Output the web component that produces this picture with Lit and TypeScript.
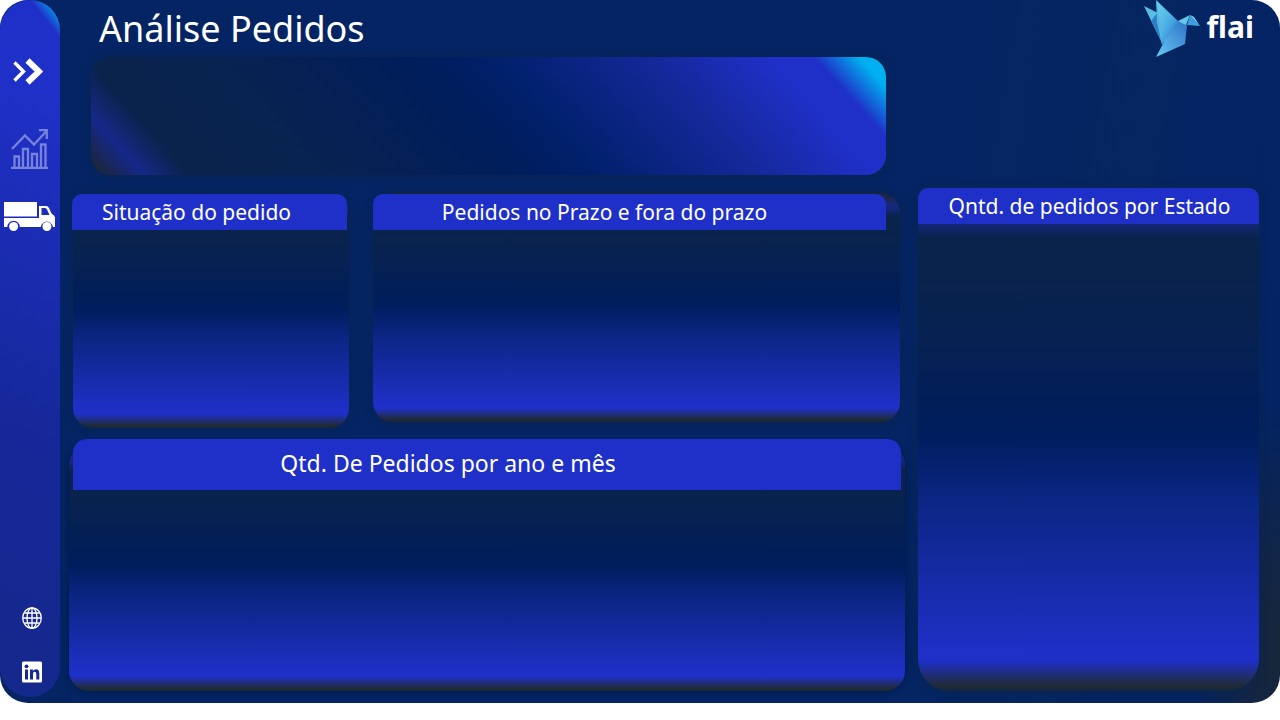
import { LitElement, html, css, svg } from "lit";
import { customElement, property } from "lit/decorators.js";

@customElement("side-nav")
class SideNav extends LitElement {
  static styles = css`
    :host {
      display: flex;
      flex-direction: column;
      align-items: center;
      box-sizing: border-box;
      width: 60px;
      flex: none;
      padding: 58px 0 14px;
      margin-bottom: 6px;
      border-radius: 34px;
      background:
        linear-gradient(52deg, transparent 72%, #0c86e4 86%, #00a0ec 100%) top / 100% 60px no-repeat,
        linear-gradient(20deg, #15288b 0%, #16289a 40%, #1f30c8 86%, #1f30c8 100%);
    }
    nav, .links { display: flex; flex-direction: column; align-items: center; }
    .links { margin-top: auto; gap: 32px; padding-left: 4px; }
    a, button { display: block; padding: 0; border: 0; background: none; color: #fff; cursor: pointer; }
    svg { display: block; }
    .toggle { margin: 0 4px 44px 0; }
    .chart { margin-bottom: 32px; color: #7682dc; }
  `;
  render() {
    return html`
      <nav aria-label="Páginas">
        <button class="toggle" aria-label="Expandir menu">
          <svg width="30" height="27" viewBox="0 0 30 27" fill="none" stroke="currentColor">
            <path d="M1.500 4.500 10.500 13.500 1.500 22.500" stroke-width="3.400" />
            <path d="M14.500 2.500 26 13.500 14.500 24.500" stroke-width="6" />
          </svg>
        </button>
        <a class="chart" href="#vendas" aria-label="Vendas">
          <svg width="38" height="40" viewBox="0 0 38 40" fill="none" stroke="currentColor" stroke-width="2.300">
            <path d="M0 38.800H37M3.500 38V27.500H8V38M12 38V20H17V38M21 38V25H26V38M30 38V15.500H34.500V38" />
            <path d="M1 20 14 6.500 23 15.500 36 1.500M28 1.200H35.800V10" />
          </svg>
        </a>
        <a href="#pedidos" aria-label="Pedidos" aria-current="page">
          <svg width="52" height="30" viewBox="0 0 52 30">
            <path fill="currentColor" fill-rule="evenodd" d="M0 1H33V15.500H0zM0 17H35V5H42Q44 5 45 7L47.500 12.500 50 14.500Q51 15.500 51 17V26H49A6.200 6.200 0 0 0 36.700 26H15.800A6.200 6.200 0 0 0 3.400 26H0zM37.500 7V14H45.500L43 8.500Q42.300 7 41 7z" />
            <circle cx="9.600" cy="25.500" r="4.500" fill="currentColor" />
            <circle cx="42.900" cy="25.500" r="4.500" fill="currentColor" />
          </svg>
        </a>
      </nav>
      <div class="links">
        <a href="#site" aria-label="Site">
          <svg width="20" height="22" viewBox="0 0 20 22" fill="none" stroke="currentColor" stroke-width="1.300">
            <ellipse cx="10" cy="11" rx="9.300" ry="10.200" />
            <ellipse cx="10" cy="11" rx="5" ry="10.200" />
            <path d="M10 1V21M1 11H19M2.300 6H17.700M2.300 16H17.700" />
          </svg>
        </a>
        <a href="#linkedin" aria-label="LinkedIn">
          <svg width="20" height="22" viewBox="0 0 20 22">
            <rect width="20" height="21" y=".5" rx="1.500" fill="currentColor" />
            <g fill="#16289a">
              <circle cx="4.500" cy="5.300" r="1.900" />
              <path d="M3 8.500H6V18.500H3zM8 8.500H10.900V10Q12 8.200 14 8.200 17.300 8.200 17.300 12.300V18.500H14.300V13Q14.300 10.800 12.700 10.800 11 10.800 11 13V18.500H8z" />
            </g>
          </svg>
        </a>
      </div>
    `;
  }
}

@customElement("report-card")
class ReportCard extends LitElement {
  @property() heading = "";
  static styles = css`
    :host {
      display: block;
      border-radius: 20px;
      background: linear-gradient(#21242e 0%, #17277a 5%, #14277a 7%, #0a234b 10%, #08224f 25%, #001d5d 49%, #0b2684 62%, #1f30c8 93%, #1f30c8 94%, #202b35 99%, #14283f 100%);
      box-shadow: 0 0 8px #0d264d;
    }
    h2 {
      margin: 0;
      font-size: 21px;
      font-weight: 400;
      line-height: 36px;
      text-align: center;
      color: #fff;
      background: #1f30c8;
      border-radius: 10px 10px 0 0;
      white-space: nowrap;
    }
    :host(.status) h2 { margin: 0 2px 0 -1px; padding-right: 26px; }
    :host(.deadline) h2 { margin: 1px 14px 0 0; padding-right: 50px; }
    :host(.monthly) h2 {
      margin: -6px 4px 0;
      padding: 0 78px 3px 0;
      font-size: 23px;
      line-height: 48px;
      border-radius: 14px 14px 0 0;
    }
    :host(.state) h2 { padding-left: 2px; }
  `;
  render() {
    return html`<h2>${this.heading}</h2>`;
  }
}

const bird = svg`
  <defs>
    <linearGradient id="wing" x1="0" y1="0" x2="1" y2="1"><stop stop-color="#68d4ee" /><stop offset=".45" stop-color="#51b6e8" /><stop offset="1" stop-color="#2376c8" /></linearGradient>
    <linearGradient id="tail" x1="1" y1="0" x2="0" y2="1"><stop stop-color="#3173c9" /><stop offset="1" stop-color="#64c9f2" /></linearGradient>
  </defs>
  <path fill="#58bde4" d="M0 6 14 13 18 43z" />
  <path fill="#2d80c3" d="M7 21 14 12 18 43z" />
  <path fill="url(#wing)" d="M12 0 34 21 18 45z" />
  <path fill="#58b4e4" d="M12 0 17 26 18 45 13 22z" />
  <path fill="url(#wing)" d="M34 21 18 45 22 38 42 24z" />
  <path fill="url(#tail)" d="M12 57 21 40 34 21 43 25 41 44z" />
  <path fill="#64c8ed" d="M34 21 46 15 42 25z" />
  <path fill="#3d9fdf" d="M46 15 56 26 43 25z" />
  <path fill="#84dcf4" d="M46 15 50 17 56 26z" />
`;

@customElement("app-root")
class AppRoot extends LitElement {
  static styles = css`
    :host {
      display: block;
      background: #fff;
      min-height: 100vh;
      font-family: "Noto Sans", "Open Sans", sans-serif;
      color: #fff;
    }
    .page {
      display: flex;
      box-sizing: border-box;
      min-height: calc(100vh - 17px);
      border-radius: 28px;
      background:
        radial-gradient(ellipse 90px 260px at 100% 94%, #17263a 0%, #17263acc 30%, transparent 100%),
        linear-gradient(100deg, #042463 0%, #042463 70%, #062661 84%, #042463 86%, #032363 100%);
    }
    main {
      flex: 1;
      display: grid;
      grid-template-columns: minmax(0, 836fr) minmax(0, 341fr);
      gap: 13px;
      padding: 0 21px 12px 9px;
    }
    .column { display: flex; flex-direction: column; }
    h1 {
      margin: 0;
      padding-left: 30px;
      font-size: 36px;
      font-weight: 400;
      line-height: 57px;
    }
    .banner {
      height: 118px;
      margin: 0 19px 18px 22px;
      border-radius: 20px;
      background: linear-gradient(48deg, #202730 0%, #1c2638 1%, #15288b 6%, #14277a 7%, #09234c 11%, #08234f 24%, #001d5d 49%, #00206b 56%, #15289a 74%, #1f30c8 87%, #1f30c8 92%, #00b0f0 97%);
      box-shadow: 0 0 8px #0d264d;
    }
    .row {
      display: grid;
      grid-template-columns: minmax(0, 276fr) minmax(0, 527fr);
      align-items: start;
      gap: 24px;
      margin: 0 5px 17px 4px;
    }
    .status { height: 234px; margin-top: 1px; }
    .deadline { height: 229px; }
    .monthly { flex: 1; box-shadow: 0 0 6px #001744; }
    .state { flex: 1; border-radius: 10px 10px 32px 32px; }
    .brand {
      display: flex;
      justify-content: flex-end;
      gap: 6px;
      height: 58px;
      margin: 0 5px 130px 0;
      font-family: "Noto Sans", sans-serif;
      font-variant-ligatures: none;
      font-weight: 700;
      font-size: 30px;
      line-height: 54px;
    }
  `;
  render() {
    return html`
      <div class="page">
        <side-nav></side-nav>
        <main>
          <div class="column">
            <h1>Análise Pedidos</h1>
            <section class="banner" aria-label="Resumo"></section>
            <div class="row">
              <report-card class="status" heading="Situação do pedido"></report-card>
              <report-card class="deadline" heading="Pedidos no Prazo e fora do prazo"></report-card>
            </div>
            <report-card class="monthly" heading="Qtd. De Pedidos por ano e mês"></report-card>
          </div>
          <div class="column">
            <div class="brand">
              <svg width="57" height="58" viewBox="0 0 57 58" aria-hidden="true">${bird}</svg>
              <span>flai</span>
            </div>
            <report-card class="state" heading="Qntd. de pedidos por Estado"></report-card>
          </div>
        </main>
      </div>
    `;
  }
}
